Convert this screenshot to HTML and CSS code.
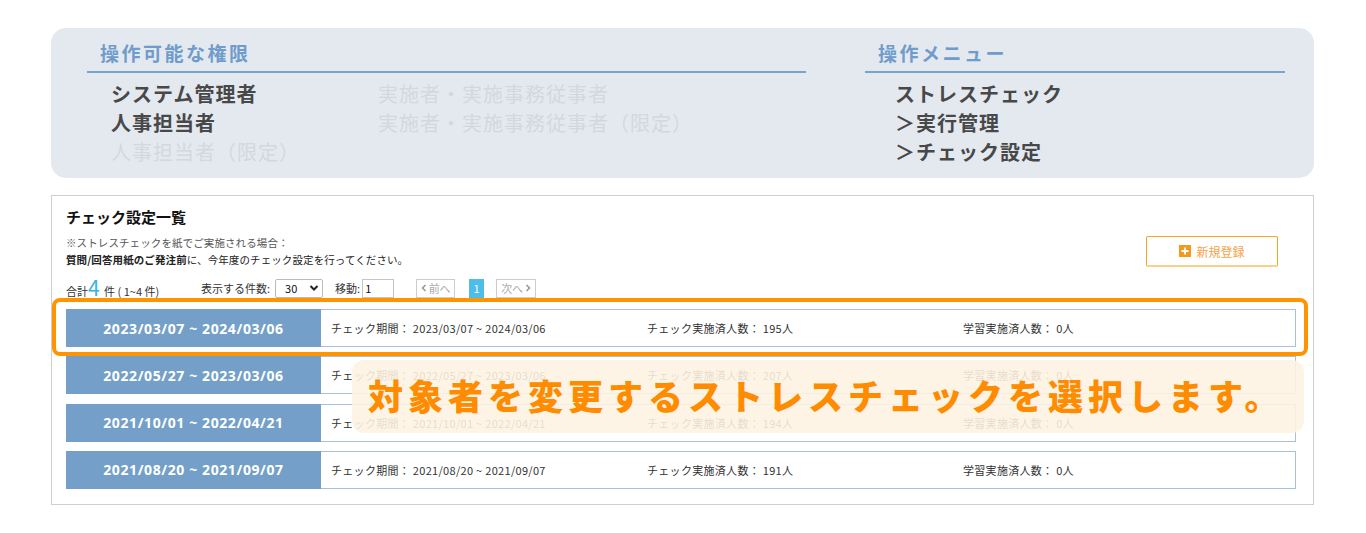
FILE: index.html
```html
<!DOCTYPE html>
<html lang="ja">
<head>
<meta charset="utf-8">
<title>チェック設定一覧</title>
<link rel="stylesheet" href="styles.css">
</head>
<body>
<section class="perm">
  <div class="perm-col perm-left">
    <h2 class="perm-head">操作可能な権限</h2>
    <div class="perm-grid">
      <span class="on">システム管理者</span><span class="off">実施者・実施事務従事者</span>
      <span class="on">人事担当者</span><span class="off">実施者・実施事務従事者（限定）</span>
      <span class="off">人事担当者（限定）</span><span></span>
    </div>
  </div>
  <div class="perm-col perm-right">
    <h2 class="perm-head">操作メニュー</h2>
    <div class="menu-list">
      <span class="on">ストレスチェック</span>
      <span class="on">＞実行管理</span>
      <span class="on">＞チェック設定</span>
    </div>
  </div>
</section>

<section class="panel">
  <h1 class="title">チェック設定一覧</h1>
  <div class="note-row">
    <div class="note">
      <p class="note1">※ストレスチェックを紙でご実施される場合：</p>
      <p class="note2"><b>質問/回答用紙のご発注前</b>に、今年度のチェック設定を行ってください。</p>
    </div>
    <button class="new-btn"><span class="plus"><svg width="12" height="12" viewBox="0 0 12 12"><rect width="12" height="12" fill="#f39a1c"/><path d="M6 2.5v7M2.5 6h7" stroke="#fff" stroke-width="1.8"/></svg></span>新規登録</button>
  </div>
  <div class="pager">
    <span class="total">合計<em>4</em> 件 ( 1~4 件)</span>
    <span class="lbl per">表示する件数:</span>
    <span class="sel">30<svg width="10" height="8" viewBox="0 0 10 8"><path d="M1.5 2l3.5 3.5L8.5 2" fill="none" stroke="#222" stroke-width="2"/></svg></span>
    <span class="lbl move">移動:</span>
    <span class="inp">1</span>
    <span class="pbtn prev"><svg width="6" height="8" viewBox="0 0 6 8"><path d="M4.5 1L1.5 4l3 3" fill="none" stroke="#999" stroke-width="1.6"/></svg>前へ</span>
    <span class="pcur">1</span>
    <span class="pbtn next">次へ<svg width="6" height="8" viewBox="0 0 6 8"><path d="M1.5 1l3 3-3 3" fill="none" stroke="#999" stroke-width="1.6"/></svg></span>
  </div>
  <div class="rows">
    <div class="row"><div class="range">2023/03/07 ~ 2024/03/06</div><div class="info"><span>チェック期間： 2023/03/07 ~ 2024/03/06</span><span>チェック実施済人数： 195人</span><span>学習実施済人数： 0人</span></div></div>
    <div class="row"><div class="range">2022/05/27 ~ 2023/03/06</div><div class="info"><span>チェック期間： 2022/05/27 ~ 2023/03/06</span><span>チェック実施済人数： 207人</span><span>学習実施済人数： 0人</span></div></div>
    <div class="row"><div class="range">2021/10/01 ~ 2022/04/21</div><div class="info"><span>チェック期間： 2021/10/01 ~ 2022/04/21</span><span>チェック実施済人数： 194人</span><span>学習実施済人数： 0人</span></div></div>
    <div class="row"><div class="range">2021/08/20 ~ 2021/09/07</div><div class="info"><span>チェック期間： 2021/08/20 ~ 2021/09/07</span><span>チェック実施済人数： 191人</span><span>学習実施済人数： 0人</span></div></div>
  </div>
  <div class="highlight"></div>
  <div class="callout">対象者を変更するストレスチェックを選択します。</div>
</section>
</body>
</html>
```
FILE: styles.css
```css
* { box-sizing: border-box; }
html, body { margin: 0; padding: 0; background: #fff; }
body {
  font-family: "Noto Sans CJK JP", "Noto Sans", sans-serif;
  color: #333;
  padding: 28px 0 0 51px;
  width: 1366px;
  height: 533px;
  overflow: hidden;
}
p, h1, h2 { margin: 0; }

/* permissions block */
.perm {
  width: 1263px;
  height: 150px;
  background: #e4e9f0;
  border-radius: 15px;
  padding: 11px 29px 0 36px;
  display: flex;
  gap: 59px;
}
.perm-left { width: 719px; }
.perm-right { width: 420px; }
.perm-head {
  font-size: 19px;
  line-height: 26px;
  font-weight: 700;
  color: #6f9ccb;
  letter-spacing: 2.5px;
  padding: 1px 0 5px 13px;
  border-bottom: 2px solid #76a3cf;
}
.perm-grid {
  display: grid;
  grid-template-columns: 267px 1fr;
  padding: 6px 0 0 24px;
  font-size: 20px;
  line-height: 29px;
  letter-spacing: 1px;
}
.menu-list {
  display: flex;
  flex-direction: column;
  padding: 6px 0 0 30px;
  font-size: 20px;
  line-height: 29px;
  letter-spacing: 1px;
}
.on { color: #484848; font-weight: 700; }
.off { color: #d3d8df; }

/* main panel */
.panel {
  position: relative;
  margin-top: 17px;
  width: 1263px;
  height: 310px;
  border: 1px solid #cfcfcf;
  padding: 11px 17px 0 14px;
}
.title {
  font-size: 15px;
  line-height: 20px;
  font-weight: 700;
  color: #111;
}
.note-row {
  display: flex;
  justify-content: space-between;
  align-items: flex-start;
  margin-top: 7px;
}
.note { font-size: 10.5px; line-height: 17px; letter-spacing: 0.1px; }
.note1 { color: #555; }
.note2 { color: #222; }
.note2 b { font-weight: 700; }
.new-btn {
  margin: 2px 18px 0 0;
  width: 132px;
  height: 31px;
  border: 1px solid #f5a623;
  border-bottom: 2px solid #fbd08d;
  background: #fff;
  border-radius: 2px;
  font-family: inherit;
  font-size: 12px;
  color: #f6a34a;
  display: flex;
  align-items: center;
  justify-content: center;
  gap: 5px;
  padding: 0;
}
.plus { display: flex; }

.pager {
  display: flex;
  align-items: center;
  height: 22px;
  margin-top: 9px;
  font-size: 11px;
  color: #333;
  white-space: nowrap;
}
.total { width: 135px; }
.total em {
  font-style: normal;
  font-size: 21px;
  line-height: 20px;
  color: #3ab0e2;
  margin-right: 2px;
}
.per { margin-right: 5px; }
.sel {
  width: 48px;
  height: 19px;
  border: 1px solid #bbb;
  border-radius: 2px;
  display: flex;
  align-items: center;
  justify-content: space-between;
  padding: 0 3px 0 9px;
  font-size: 11px;
  color: #111;
  margin-right: 12px;
}
.move { margin-right: 2px; }
.inp {
  width: 32px;
  height: 19px;
  border: 1px solid #c5c5c5;
  padding-left: 2px;
  line-height: 17px;
  color: #111;
  margin-right: 22px;
}
.pbtn {
  height: 19px;
  border: 1px solid #ccc;
  color: #aaa;
  display: flex;
  align-items: center;
  justify-content: center;
  gap: 2px;
  padding: 0;
}
.prev { width: 39px; }
.next { width: 40px; }
.pcur {
  width: 15px;
  height: 19px;
  background: #4dbde9;
  color: #fff;
  text-align: center;
  line-height: 19px;
  margin: 0 12px 0 14px;
}

/* rows */
.rows {
  display: flex;
  flex-direction: column;
  gap: 9.3px;
  margin-top: 10px;
}
.row {
  display: flex;
  height: 38px;
  border: 1px solid #a8c0d9;
  border-left: none;
}
.range {
  width: 255px;
  background: #739fc8;
  color: #fff;
  font-family: "Noto Sans", "Noto Sans CJK JP", sans-serif;
  font-weight: 700;
  font-size: 14px;
  letter-spacing: 0.6px;
  display: flex;
  align-items: center;
  justify-content: center;
  margin-top: -1px;
  margin-bottom: -1px;
}
.info {
  flex: 1;
  display: grid;
  grid-template-columns: 316px 316px 1fr;
  align-items: center;
  padding-left: 10px;
  font-size: 11px;
  letter-spacing: 0.3px;
  color: #333;
}

/* annotation overlays */
.highlight {
  position: absolute;
  left: 0;
  top: 102px;
  width: 1256px;
  height: 58px;
  border: 4px solid #ff9300;
  border-radius: 8px;
}
.callout {
  position: absolute;
  left: 300px;
  top: 164px;
  width: 952px;
  height: 73px;
  border-radius: 12px;
  background: rgba(254, 242, 226, 0.88);
  color: #ff8c00;
  font-size: 35px;
  font-weight: 900;
  letter-spacing: 5px;
  line-height: 70px;
  padding-left: 16px;
  white-space: nowrap;
}
```
